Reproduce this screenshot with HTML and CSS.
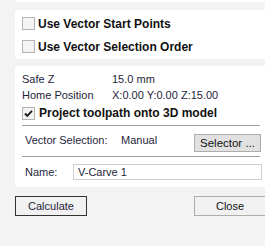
FILE: index.html
```html
<!DOCTYPE html>
<html lang="en">
<head>
  <meta charset="UTF-8">
  <title>V-Carve Toolpath</title>
  <link rel="stylesheet" href="styles.css">
</head>
<body>
  <div class="panel panel-top"></div>

  <div class="panel panel-options">
    <label class="check-row">
      <span class="checkbox"></span>
      <span class="check-label">Use Vector Start Points</span>
    </label>
    <label class="check-row">
      <span class="checkbox"></span>
      <span class="check-label">Use Vector Selection Order</span>
    </label>
  </div>

  <div class="panel panel-settings">
    <div class="info-row">
      <span class="info-name">Safe Z</span>
      <span class="info-value">15.0 mm</span>
    </div>
    <div class="info-row">
      <span class="info-name">Home Position</span>
      <span class="info-value">X:0.00 Y:0.00 Z:15.00</span>
    </div>
    <label class="check-row check-project">
      <span class="checkbox">
        <svg width="11" height="11" viewBox="0 0 11 11">
          <path d="M2 5.5 L4.3 7.8 L9 2.8" fill="none" stroke="#1c1c1c" stroke-width="1.9"/>
        </svg>
      </span>
      <span class="check-label">Project toolpath onto 3D model</span>
    </label>

    <div class="separator"></div>

    <div class="select-row">
      <span class="select-name">Vector Selection:</span>
      <span class="select-value">Manual</span>
      <button class="btn btn-selector">Selector ...</button>
    </div>

    <div class="separator"></div>

    <div class="name-row">
      <span class="select-name name-label">Name:</span>
      <input class="name-input" type="text" value="V-Carve 1">
    </div>
  </div>

  <div class="actions">
    <button class="btn btn-action btn-default">Calculate</button>
    <button class="btn btn-action">Close</button>
  </div>
</body>
</html>
```

FILE: styles.css
```css
body {
  font-family: 'Liberation Sans', Arial, sans-serif;
  font-size: 11px;
  color: #1e1e3a;
  margin: 0;
  padding: 0;
  background-color: #f3f3f3;
  width: 265px;
  height: 246px;
  overflow: hidden;
}
.panel {
  background-color: white;
  margin-left: 15px;
  border-radius: 3px 0 0 3px;
}
.panel-top {
  height: 2px;
  border-radius: 0 0 0 3px;
}
.panel-options {
  margin-top: 8px;
  height: 49px;
  padding: 7px 0 0 7px;
  box-sizing: border-box;
}
.check-row {
  display: flex;
  align-items: center;
  height: 13px;
  margin-bottom: 10px;
}
.checkbox {
  width: 11px;
  height: 11px;
  border: 1px solid #b4b4b4;
  background-color: #f4f4f4;
  display: flex;
  align-items: center;
  justify-content: center;
}
.check-label {
  font-weight: bold;
  font-size: 12px;
  color: #111;
  margin-left: 3px;
}
.panel-settings {
  margin-top: 7px;
  padding-top: 5px;
}
.info-row {
  display: flex;
  height: 16px;
  line-height: 16px;
  padding-left: 7px;
}
.info-name {
  width: 90px;
}
.check-project {
  height: 20px;
  margin: 0 0 0 7px;
}
.check-project .check-label {
  margin-left: 4px;
}
.separator {
  height: 1px;
  background-color: #a0a0a0;
  margin: 2px 5px 0 7px;
}
.select-row {
  display: flex;
  align-items: flex-start;
  padding: 7px 4px 2px 10px;
}
.select-name {
  line-height: 14px;
  width: 96px;
}
.select-value {
  line-height: 14px;
  flex: 1;
}
.btn {
  font-family: 'Liberation Sans', Arial, sans-serif;
  font-size: 11px;
  color: #111;
  padding: 0;
  cursor: pointer;
}
.btn-selector {
  margin-top: 1px;
  width: 67px;
  height: 18px;
  border: 1px solid #adadad;
  background-color: #e1e1e1;
  font-size: 11.5px;
}
.name-row {
  display: flex;
  align-items: flex-start;
  padding: 7px 3px 7px 10px;
}
.name-label {
  width: 48px;
  line-height: 16px;
}
.name-input {
  flex: 1;
  height: 16px;
  box-sizing: border-box;
  border: 1px solid #d0d0d0;
  padding: 0 0 0 4px;
  margin: 0;
  font-family: 'Liberation Sans', Arial, sans-serif;
  font-size: 11px;
  color: #1e1e3a;
}
.actions {
  display: flex;
  justify-content: space-between;
  padding-left: 15px;
  margin-top: 9px;
}
.btn-action {
  width: 72px;
  height: 20px;
  border: 1px solid #adadad;
  background-color: #f1f1f1;
}
.btn-action:last-child {
  margin-right: -1px;
}
.btn-default {
  border-color: #333;
  color: #1e1e3a;
}
```
